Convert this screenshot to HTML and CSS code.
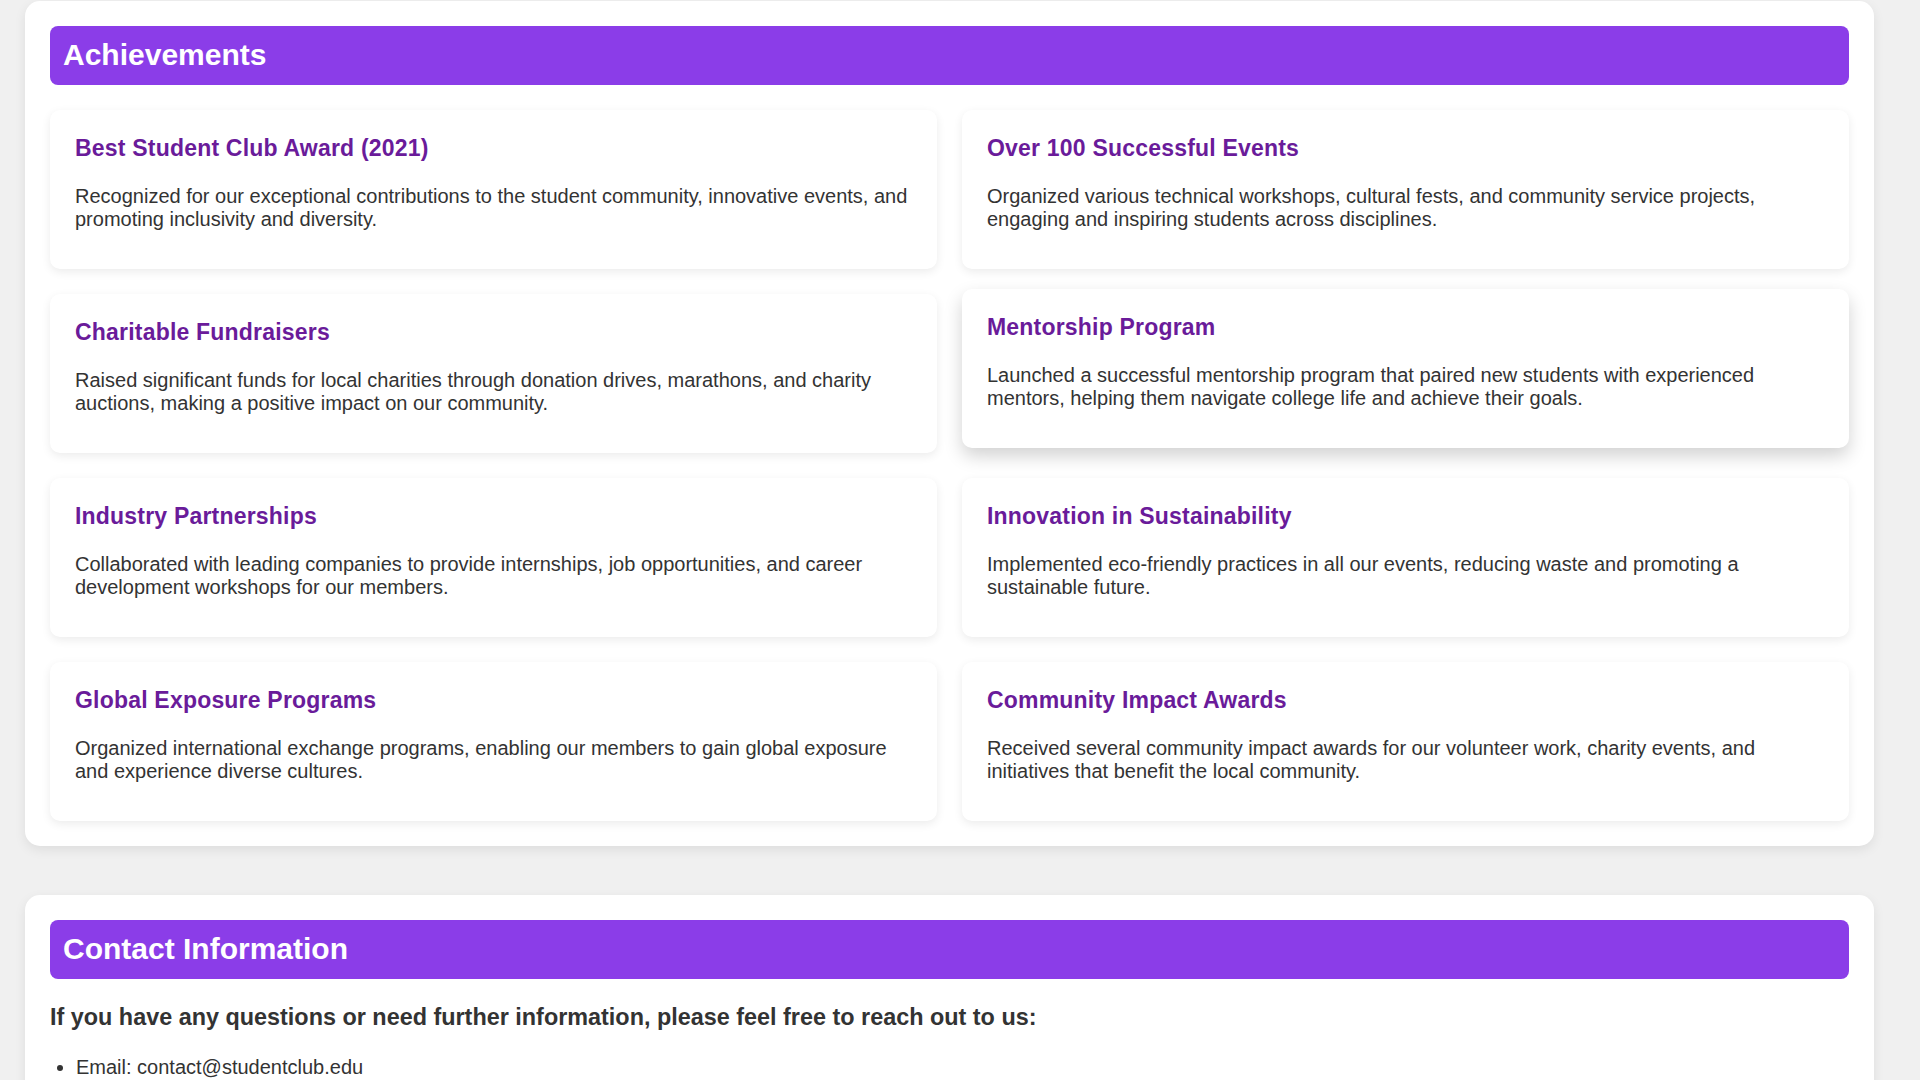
FILE: index.html
```html
<!DOCTYPE html>
<html lang="en">
<head>
<meta charset="utf-8">
<title>Student Club – Achievements</title>
<link rel="stylesheet" href="styles.css">
</head>
<body>
<main class="page">
  <section class="section">
    <h2 class="section-title">Achievements</h2>
    <div class="card-grid">
      <article class="card">
        <h3 class="card-title">Best Student Club Award (2021)</h3>
        <p class="card-text">Recognized for our exceptional contributions to the student community, innovative events, and promoting inclusivity and diversity.</p>
      </article>
      <article class="card">
        <h3 class="card-title">Over 100 Successful Events</h3>
        <p class="card-text">Organized various technical workshops, cultural fests, and community service projects, engaging and inspiring students across disciplines.</p>
      </article>
      <article class="card">
        <h3 class="card-title">Charitable Fundraisers</h3>
        <p class="card-text">Raised significant funds for local charities through donation drives, marathons, and charity auctions, making a positive impact on our community.</p>
      </article>
      <article class="card card--raised">
        <h3 class="card-title">Mentorship Program</h3>
        <p class="card-text">Launched a successful mentorship program that paired new students with experienced mentors, helping them navigate college life and achieve their goals.</p>
      </article>
      <article class="card">
        <h3 class="card-title">Industry Partnerships</h3>
        <p class="card-text">Collaborated with leading companies to provide internships, job opportunities, and career development workshops for our members.</p>
      </article>
      <article class="card">
        <h3 class="card-title">Innovation in Sustainability</h3>
        <p class="card-text">Implemented eco-friendly practices in all our events, reducing waste and promoting a sustainable future.</p>
      </article>
      <article class="card">
        <h3 class="card-title">Global Exposure Programs</h3>
        <p class="card-text">Organized international exchange programs, enabling our members to gain global exposure and experience diverse cultures.</p>
      </article>
      <article class="card">
        <h3 class="card-title">Community Impact Awards</h3>
        <p class="card-text">Received several community impact awards for our volunteer work, charity events, and initiatives that benefit the local community.</p>
      </article>
    </div>
  </section>

  <section class="section">
    <h2 class="section-title">Contact Information</h2>
    <p class="contact-intro">If you have any questions or need further information, please feel free to reach out to us:</p>
    <ul class="contact-list">
      <li>Email: contact@studentclub.edu</li>
    </ul>
  </section>
</main>
</body>
</html>
```
FILE: styles.css
```css
html, body {
  margin: 0;
  padding: 0;
}

body {
  background: #f0f0f0;
  font-family: "Liberation Sans", Arial, sans-serif;
  color: #333;
}

.page {
  padding: 1px 0 0;
  display: flex;
  flex-direction: column;
  gap: 49px;
}

.section {
  box-sizing: border-box;
  width: 1849px;
  margin-left: 25px;
  padding: 25px;
  background: #fff;
  border-radius: 15px;
  box-shadow: 0 4px 12px rgba(0, 0, 0, 0.08);
}

.section-title {
  margin: 0 0 25px;
  padding: 11px 13px 13px;
  background: #8b3de8;
  color: #fff;
  font-size: 30px;
  line-height: 35px;
  font-weight: bold;
  border-radius: 8px;
}

.card-grid {
  display: grid;
  grid-template-columns: 1fr 1fr;
  gap: 25px;
}

.card {
  background: #fff;
  border-radius: 10px;
  padding: 25px;
  box-shadow: 0 3px 10px rgba(0, 0, 0, 0.08);
}

.card--raised {
  transform: translateY(-5px);
  box-shadow: 0 8px 18px rgba(0, 0, 0, 0.18);
}

.card-title {
  margin: 0 0 23px;
  color: #6a1b9a;
  font-size: 23px;
  letter-spacing: 0.2px;
  font-weight: bold;
}

.card-text {
  margin: 0 0 13px;
  font-size: 20px;
  line-height: 23px;
  color: #333;
}

.contact-intro {
  margin: 0 0 25px;
  font-size: 23.4px;
  font-weight: bold;
  color: #333;
}

.contact-list {
  margin: 0;
  padding-left: 26px;
  font-size: 20px;
  line-height: 23px;
}
```
